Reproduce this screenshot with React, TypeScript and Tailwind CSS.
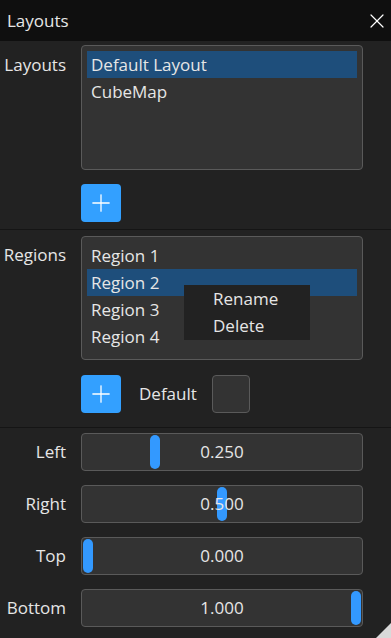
import { X, Plus } from "lucide-react"

const font = { fontFamily: "'Open Sans', 'Noto Sans', sans-serif" }

type SliderProps = { label: string; value: number }

const Slider = ({ label, value }: SliderProps) => (
  <div className="flex items-center">
    <div className="w-[66px] text-right text-[17px] text-[#e6e6e6]">{label}</div>
    <div className="relative ml-[15px] w-[282px] h-[38px] rounded-[4px] border border-[#5a5a5a] bg-[#333] flex items-center justify-center text-[17px] text-[#e6e6e6]">
      <div
        className="absolute top-[1px] w-[10px] h-[34px] rounded-full bg-[#3399ff]"
        style={{ left: 1 + value * 268 }}
      />
      <span className="relative">{value.toFixed(3)}</span>
    </div>
  </div>
)

const AddButton = () => (
  <button className="w-[40px] h-[38px] rounded-[4px] bg-[#33a0ff] flex items-center justify-center">
    <Plus size={28} strokeWidth={1.1} className="text-white" />
  </button>
)

export default function App() {
  return (
    <div className="w-[391px] h-[638px] bg-[#222] relative overflow-hidden text-[#e6e6e6] text-[17px]" style={font}>
      <div className="h-[41px] bg-[#0f0f0f] flex items-center justify-between pl-[7px] pr-[2px]">
        <span>Layouts</span>
        <X size={24} strokeWidth={1.2} className="text-white" />
      </div>

      <div className="pt-[4px] pb-[7px] border-b border-[#151515]">
        <div className="flex">
          <div className="w-[66px] text-right pt-[7px]">Layouts</div>
          <div className="ml-[15px] w-[282px] h-[125px] rounded-[4px] border border-[#5a5a5a] bg-[#333] p-[5px]">
            <div className="h-[27px] bg-[#1e4e7b] flex items-center px-[4px]">Default Layout</div>
            <div className="h-[27px] flex items-center px-[4px]">CubeMap</div>
          </div>
        </div>
        <div className="ml-[81px] mt-[14px]">
          <AddButton />
        </div>
      </div>

      <div className="pt-[6px] pb-[14px] border-b border-[#151515]">
        <div className="flex">
          <div className="w-[66px] text-right pt-[6px]">Regions</div>
          <div className="relative ml-[15px] w-[282px] h-[124px] rounded-[4px] border border-[#5a5a5a] bg-[#333] pt-[5px] px-[5px]">
            <div className="h-[27px] flex items-center px-[4px]">Region 1</div>
            <div className="h-[27px] bg-[#1e4e7b] flex items-center px-[4px]">Region 2</div>
            <div className="h-[27px] flex items-center px-[4px]">Region 3</div>
            <div className="h-[27px] flex items-center px-[4px]">Region 4</div>
            <div className="absolute left-[102px] top-[48px] w-[126px] h-[55px] bg-[#222] flex flex-col justify-center pl-[29px]">
              <div className="h-[27px] flex items-center">Rename</div>
              <div className="h-[27px] flex items-center">Delete</div>
            </div>
          </div>
        </div>
        <div className="ml-[81px] mt-[15px] flex items-center">
          <AddButton />
          <span className="ml-[18px]">Default</span>
          <div className="ml-[15px] w-[38px] h-[38px] rounded-[4px] border border-[#5a5a5a] bg-[#333]" />
        </div>
      </div>

      <div className="pt-[5px] flex flex-col gap-[14px]">
        <Slider label="Left" value={0.25} />
        <Slider label="Right" value={0.5} />
        <Slider label="Top" value={0} />
        <Slider label="Bottom" value={1} />
      </div>

      <svg className="absolute right-0 bottom-0" width="15" height="15" viewBox="0 0 15 15">
        <polygon points="15,0 15,15 0,15" fill="#d9d9d9" />
      </svg>
    </div>
  )
}
